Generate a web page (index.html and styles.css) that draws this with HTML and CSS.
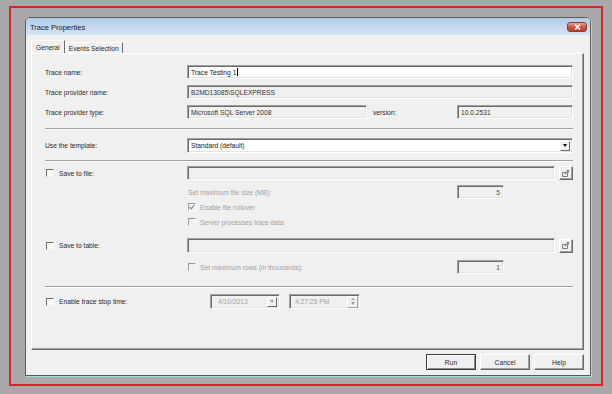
FILE: index.html
```html
<!DOCTYPE html>
<html lang="en">
<head>
    <meta charset="UTF-8">
    <meta name="viewport" content="width=device-width, initial-scale=1.0">
    <title>Trace Properties</title>
    <link rel="stylesheet" href="styles.css">
</head>
<body>
    <div class="frame">
        <div class="dialog">
            <div class="titlebar">
                <span class="title">Trace Properties</span>
                <button class="close-btn">
                    <svg width="7" height="6" viewBox="0 0 7 6"><path d="M1 0.5l5 5M6 0.5l-5 5" stroke="#fff" stroke-width="1.5"/></svg>
                </button>
            </div>
            <div class="dialog-body">
                <div class="tabs">
                    <div class="tab active">General</div>
                    <div class="tab">Events Selection</div>
                </div>
                <div class="panel">
                    <div class="row row-name">
                        <span class="label">Trace name:</span>
                        <div class="field editable wide">Trace Testing 1<span class="caret"></span></div>
                    </div>
                    <div class="row row-provider">
                        <span class="label">Trace provider name:</span>
                        <div class="field wide">B2MD13085\SQLEXPRESS</div>
                    </div>
                    <div class="row row-type">
                        <span class="label">Trace provider type:</span>
                        <div class="field type-field">Microsoft SQL Server 2008</div>
                        <span class="version-label">version:</span>
                        <div class="field wide">10.0.2531</div>
                    </div>

                    <div class="sep sep-top"></div>

                    <div class="row row-template">
                        <span class="label">Use the template:</span>
                        <div class="field editable wide combo">
                            <span>Standard (default)</span>
                            <span class="combo-btn"><span class="arrow"></span></span>
                        </div>
                    </div>

                    <div class="sep sep-mid"></div>

                    <div class="row row-file">
                        <label class="label check-label"><span class="check"></span>Save to file:</label>
                        <div class="field wide"></div>
                        <button class="browse-btn">
                            <svg width="8" height="7" viewBox="0 0 8 7"><path d="M0.5 2.5h5v4h-5z M2.5 4.5l4-4 M4.5 0.5h2v2" fill="none" stroke="#7a7a7a" stroke-width="1"/></svg>
                        </button>
                    </div>
                    <div class="row row-size">
                        <span class="label"></span>
                        <span class="hint disabled">Set maximum file size (MB):</span>
                        <div class="field num-field">5</div>
                    </div>
                    <div class="row row-rollover">
                        <span class="label"></span>
                        <span class="check off">
                            <svg width="6" height="6" viewBox="0 0 6 6"><path d="M0.6 2.8l1.7 2L5.4 0.8" fill="none" stroke="#8c8c8c" stroke-width="1.2"/></svg>
                        </span>
                        <span class="disabled">Enable file rollover</span>
                    </div>
                    <div class="row row-server">
                        <span class="label"></span>
                        <span class="check off"></span>
                        <span class="disabled">Server processes trace data</span>
                    </div>

                    <div class="row row-table">
                        <label class="label check-label"><span class="check"></span>Save to table:</label>
                        <div class="field wide"></div>
                        <button class="browse-btn">
                            <svg width="8" height="7" viewBox="0 0 8 7"><path d="M0.5 2.5h5v4h-5z M2.5 4.5l4-4 M4.5 0.5h2v2" fill="none" stroke="#7a7a7a" stroke-width="1"/></svg>
                        </button>
                    </div>
                    <div class="row row-rows">
                        <span class="label"></span>
                        <span class="hint">
                            <span class="check off"></span>
                            <span class="disabled">Set maximum rows (in thousands):</span>
                        </span>
                        <div class="field num-field">1</div>
                    </div>

                    <div class="sep sep-bottom"></div>

                    <div class="row row-stop">
                        <label class="label check-label"><span class="check"></span>Enable trace stop time:</label>
                        <div class="field date-field">
                            <span class="disabled">4/10/2013</span>
                            <span class="combo-btn"><span class="arrow grey"></span></span>
                        </div>
                        <div class="field time-field">
                            <span class="disabled">4:27:25 PM</span>
                            <span class="spinner">
                                <span class="arrow up grey"></span>
                                <span class="arrow grey"></span>
                            </span>
                        </div>
                    </div>
                </div>
                <div class="buttons">
                    <button class="btn default">Run</button>
                    <button class="btn">Cancel</button>
                    <button class="btn">Help</button>
                </div>
            </div>
        </div>
    </div>
</body>
</html>
```

FILE: styles.css
```css
* {
    margin: 0;
    padding: 0;
    box-sizing: border-box;
}

body {
    width: 612px;
    height: 394px;
    overflow: hidden;
    background: #a9a9a9;
    font-family: 'Liberation Sans', Tahoma, Arial, sans-serif;
    font-size: 6.7px;
    color: #2a2a2a;
}

button {
    font-family: inherit;
    font-size: inherit;
    color: inherit;
}

.frame {
    margin: 6px 0 0 9px;
    width: 594px;
    height: 380px;
    border: 2px solid #dc242b;
    padding: 9px 0 0 14px;
}

.dialog {
    width: 566px;
    height: 359px;
    border: 1px solid #5a5a5a;
    border-radius: 5px 5px 0 0;
    box-shadow: 1px 1px 0 #a6d9ea;
    background: #f0f0f0;
    display: flex;
    flex-direction: column;
    overflow: hidden;
}

.titlebar {
    flex: none;
    height: 17px;
    background: linear-gradient(#b1cbe7, #d7e4f3);
    display: flex;
    align-items: center;
    justify-content: space-between;
    padding: 1px 3px 0 4px;
}

.title {
    font-size: 7.5px;
    color: #151515;
}

.close-btn {
    width: 20px;
    height: 10px;
    border: 1px solid #8c3b30;
    border-radius: 3px;
    background: linear-gradient(#e4a394, #c9513d 55%, #c4442f);
    display: flex;
    align-items: center;
    justify-content: center;
}

.dialog-body {
    flex: 1;
    display: flex;
    flex-direction: column;
    padding: 5px 6px 5px 5px;
}

.tabs {
    display: flex;
    align-items: flex-end;
    height: 13px;
}

.tab {
    height: 11px;
    padding: 0 3px;
    border: 1px solid;
    border-color: #fff #6b6b6b transparent #fff;
    border-bottom: none;
    display: flex;
    align-items: center;
}

.tab.active {
    height: 13px;
    padding: 0 4px;
}

.panel {
    height: 297px;
    border: 1px solid;
    border-color: #fff #6b6b6b #6b6b6b #fff;
    box-shadow: inset -1px -1px 0 #a0a0a0;
    padding: 0 10px 0 13px;
    display: flex;
    flex-direction: column;
}

.row {
    display: flex;
    align-items: center;
    height: 14px;
    flex: none;
}

.row-name { margin-top: 11px; }
.row-provider { margin-top: 6px; }
.row-type { margin-top: 6px; }
.row-template { margin-top: 8px; height: 15px; }
.row-file { margin-top: 4px; }
.row-size { margin-top: 5px; }
.row-rollover { margin-top: 2px; height: 12px; }
.row-server { margin-top: 3px; height: 12px; }
.row-table { margin-top: 10px; height: 15px; }
.row-rows { margin-top: 7px; }
.row-stop { margin-top: 6px; height: 15px; }

.sep {
    flex: none;
    height: 2px;
    border-top: 1px solid #a0a0a0;
    border-bottom: 1px solid #fff;
}

.sep-top { margin-top: 9px; }
.sep-mid { margin-top: 7px; }
.sep-bottom { margin-top: 12px; }

.label {
    flex: 0 0 142px;
    display: flex;
    align-items: center;
}

.check-label {
    gap: 5px;
    padding-left: 1px;
}

.field {
    height: 100%;
    display: flex;
    align-items: center;
    padding-left: 3px;
    border: 1px solid;
    border-color: #a0a0a0 #fff #fff #a0a0a0;
    box-shadow: inset 1px 1px 0 #6b6b6b, inset -1px -1px 0 #e3e3e3;
    background: #f0f0f0;
    color: #333;
    white-space: nowrap;
}

.field.editable {
    background: #fff;
    color: #1a1a1a;
}

.wide {
    flex: 1;
}

.caret {
    width: 1px;
    height: 8px;
    background: #000;
    margin-left: 1px;
}

.type-field {
    flex: 0 0 180px;
}

.version-label {
    flex: 0 0 90px;
    padding-left: 6px;
}

.combo {
    justify-content: space-between;
    padding-right: 2px;
}

.combo-btn {
    width: 10px;
    height: 10px;
    background: #f0f0f0;
    border: 1px solid;
    border-color: #fff #6b6b6b #6b6b6b #fff;
    display: flex;
    align-items: center;
    justify-content: center;
}

.arrow {
    border-left: 2.5px solid transparent;
    border-right: 2.5px solid transparent;
    border-top: 3px solid #000;
}

.arrow.grey {
    border-top-color: #a0a0a0;
}

.arrow.up {
    border-top: none;
    border-bottom: 2.5px solid #a0a0a0;
}

.browse-btn {
    flex: 0 0 14px;
    height: 14px;
    margin-left: 4px;
    background: #f0f0f0;
    border: 1px solid;
    border-color: #fff #6b6b6b #6b6b6b #fff;
    box-shadow: inset -1px -1px 0 #a0a0a0;
    display: flex;
    align-items: center;
    justify-content: center;
}

.hint {
    flex: 0 0 270px;
    display: flex;
    align-items: center;
    gap: 4px;
    padding-left: 1px;
}

.disabled {
    color: #a0a0a0;
}

.num-field {
    flex: 0 0 47px;
    justify-content: flex-end;
    padding-right: 3px;
    color: #5a5a5a;
}

.row-rollover .check,
.row-server .check {
    margin: 0 4px 0 1px;
}

.check {
    flex: none;
    width: 8px;
    height: 8px;
    border: 1px solid;
    border-color: #6e6e6e #f4f4f4 #f4f4f4 #6e6e6e;
    background: #fbfbfb;
    display: flex;
    align-items: center;
    justify-content: center;
}

.check.off {
    background: #f0f0f0;
    border-color: #9a9a9a #f8f8f8 #f8f8f8 #9a9a9a;
}

.date-field {
    flex: 0 0 70px;
    margin-left: 23px;
    justify-content: space-between;
    padding: 0 2px 0 7px;
}

.time-field {
    flex: 0 0 71px;
    margin-left: 9px;
    justify-content: space-between;
    padding: 0 1px 0 5px;
}

.spinner {
    width: 11px;
    height: 12px;
    display: flex;
    flex-direction: column;
    align-items: center;
    justify-content: space-around;
    border: 1px solid;
    border-color: #fff #a0a0a0 #a0a0a0 #fff;
}

.buttons {
    display: flex;
    justify-content: flex-end;
    gap: 4px;
    margin-top: 4px;
    height: 16px;
}

.btn {
    width: 50px;
    height: 16px;
    background: #f0f0f0;
    border: 1px solid;
    border-color: #fff #6b6b6b #6b6b6b #fff;
    box-shadow: inset -1px -1px 0 #a0a0a0;
}

.btn.default {
    border-color: #3c3c3c;
    box-shadow: inset 1px 1px 0 #fff, inset -1px -1px 0 #8a8a8a;
}
```
